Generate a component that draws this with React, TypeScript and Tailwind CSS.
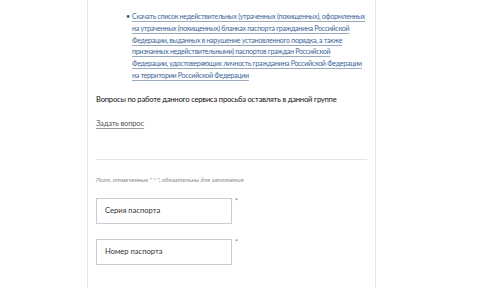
export default function App() {
  return (
    <div className="min-h-[288px] w-[480px] overflow-hidden bg-white font-['Lato',sans-serif]">
      <div className="ml-[87px] min-h-[288px] w-[289px] border-x border-[#e6e6e6] px-[8px]">
        <ul className="pl-[36px] pt-[11px]">
          <li className="relative text-[7.1px] leading-[11.8px] tracking-[-0.3px] text-[#3c679a]">
            <span className="absolute -left-[6px] top-0 text-[#555]">•</span>
            <a className="underline decoration-[#9aa9bb] underline-offset-2">
              Скачать список недействительных (утраченных (похищенных), оформленных на утраченных (похищенных) бланках паспорта гражданина Российской Федерации, выданных в нарушение установленного порядка, а также признанных недействительными) паспортов граждан Российской Федерации, удостоверяющих личность гражданина Российской Федерации на территории Российской Федерации
            </a>
          </li>
        </ul>
        <p className="mt-[11px] text-[7.6px] leading-[12px] tracking-[-0.2px] text-[#111]">
          Вопросы по работе данного сервиса просьба оставлять в данной группе
        </p>
        <a className="mt-[12px] inline-block text-[7.6px] leading-[12px] tracking-[-0.2px] text-[#555] underline decoration-[#9a9a9a] underline-offset-2">
          Задать вопрос
        </a>
        <hr className="mt-[27px] border-[#e3e3e3]" />
        <p className="mt-[15px] text-[6.3px] italic leading-[10px] text-[#8a8a8a]">
          Поля, отмеченные " * ", обязательны для заполнения
        </p>
        <div className="mt-[13px] flex flex-col gap-[15px]">
          {['Серия паспорта', 'Номер паспорта'].map((label) => (
            <div key={label} className="flex items-start gap-[3px]">
              <div className="flex h-[26px] w-[136px] items-center border border-[#c7ced8] px-[8px] text-[7.6px] text-[#333]">
                {label}
              </div>
              <span className="text-[7px] leading-[7px] text-[#777]">*</span>
            </div>
          ))}
        </div>
      </div>
    </div>
  );
}
